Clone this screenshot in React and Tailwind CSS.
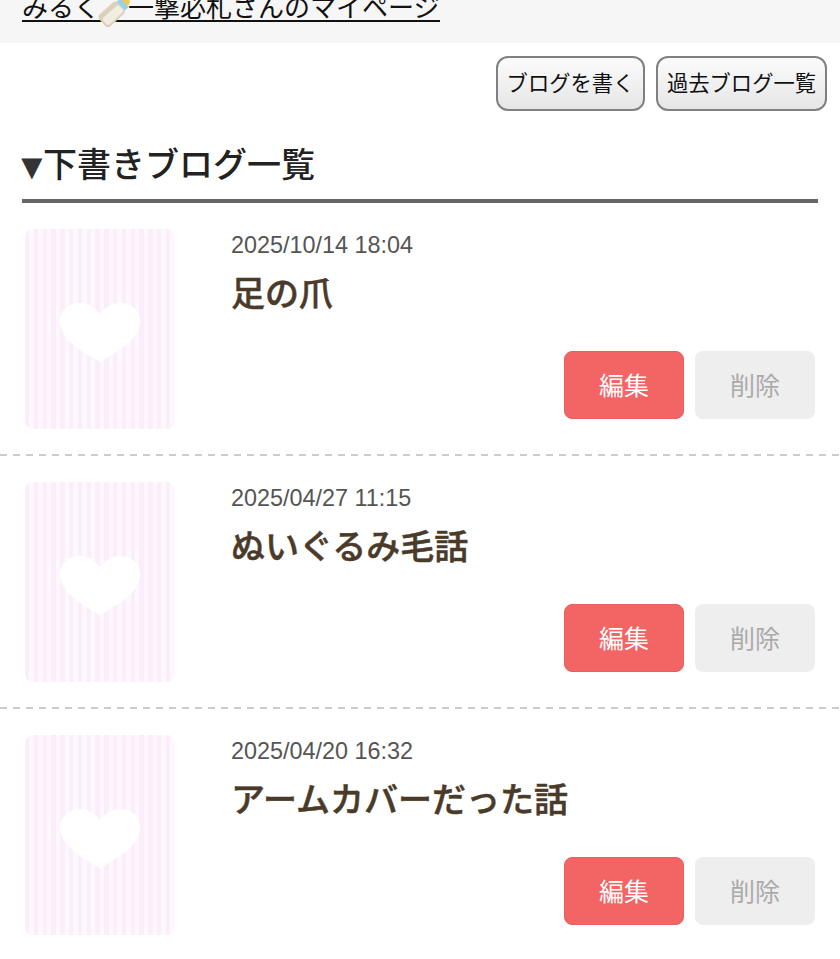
const jp = "font-['Liberation_Sans','Noto_Sans_CJK_JP',sans-serif]";

const drafts = [
  { date: "2025/10/14 18:04", title: "足の爪" },
  { date: "2025/04/27 11:15", title: "ぬいぐるみ毛話" },
  { date: "2025/04/20 16:32", title: "アームカバーだった話" },
];

function Bottle() {
  return (
    <svg width="30" height="30" viewBox="0 0 30 30" className="inline-block align-[-2px] mx-[-1px] my-[-10px] overflow-visible">
      <g transform="rotate(48 13 15)">
        <rect x="9" y="-7" width="8" height="7" rx="3" fill="#f2c94c" />
        <rect x="7" y="-2" width="12" height="6" rx="1" fill="#9fd0ea" />
        <rect x="5" y="3" width="16" height="25" rx="4" fill="#d9d1ba" />
        <rect x="10" y="4" width="9" height="22" rx="3" fill="#f1ede1" />
      </g>
    </svg>
  );
}

function Thumb() {
  return (
    <div className="w-[150px] h-[200px] shrink-0 rounded-[8px] flex items-center justify-center pt-[8px] bg-[repeating-linear-gradient(90deg,#fbeefb_0,#fbeefb_4.4px,#fef8fe_4.4px,#fef8fe_8.8px)]">
      <svg width="80" height="60" viewBox="0 0 80 60">
        <path d="M40 59C30 52 0 40 0 18C0 7 9 0 20 0C29 0 36 5 40 12C44 5 51 0 60 0C71 0 80 7 80 18C80 40 50 52 40 59Z" fill="#fff" />
      </svg>
    </div>
  );
}

function DraftRow({ item, last }) {
  return (
    <div>
      <div className="flex pl-[25px] pr-[25px] pt-[26px] pb-[25px]">
        <Thumb />
        <div className="flex-1 flex flex-col ml-[56px]">
          <p className="text-[23.4px] leading-[30px] mt-[1px] text-[#555555]">{item.date}</p>
          <h3 className="text-[34px] leading-[48px] mt-[10px] font-medium [-webkit-text-stroke:0.5px_#4a3a2a] text-[#4a3a2a]">{item.title}</h3>
          <div className="flex justify-end gap-[11px] mt-auto mb-[10px]">
            <button className="w-[120px] h-[68px] pt-[3px] rounded-[8px] border border-[#e86060] bg-[#f36464] text-white text-[25px]">編集</button>
            <button className="w-[120px] h-[68px] pt-[3px] rounded-[8px] bg-[#eeeeee] text-[#aaaaaa] text-[25px]">削除</button>
          </div>
        </div>
      </div>
      {!last && <div className="h-[2px] bg-[repeating-linear-gradient(90deg,#cccccc_0,#cccccc_7px,transparent_7px,transparent_13px)]" />}
    </div>
  );
}

export default function App() {
  return (
    <div className={`${jp} w-[840px] h-[959px] overflow-hidden bg-white text-[#222222]`}>
      <div className="h-[43px] bg-[#f6f6f6] pl-[22px] overflow-hidden">
        <a className="block w-fit mt-[-4px] text-[26px] leading-[24px] text-[#111111] border-b-2 border-[#111111] whitespace-nowrap">
          みるく<Bottle />一撃必札さんのマイページ
        </a>
      </div>
      <div className="flex justify-end gap-[11px] pr-[13px] mt-[13px]">
        <button className="w-[149px] h-[55px] pt-[2px] rounded-[12px] border-2 border-[#808080] bg-gradient-to-b from-[#fbfbfb] to-[#e6e6e6] text-[21.3px] text-[#111111]">ブログを書く</button>
        <button className="w-[171px] h-[55px] pt-[2px] rounded-[12px] border-2 border-[#808080] bg-gradient-to-b from-[#fbfbfb] to-[#e6e6e6] text-[21.3px] text-[#111111]">過去ブログ一覧</button>
      </div>
      <h2 className="mx-[22px] mt-[27px] h-[65px] border-b-4 border-[#666666] text-[34px] leading-[54px] font-medium text-[#222222]">
        <span className="inline-flex w-[29px] ml-[-8px] justify-start text-[36px] leading-[0] align-[-2px] text-[#333333]">▼</span>下書きブログ一覧
      </h2>
      {drafts.map((item, i) => (
        <DraftRow key={i} item={item} last={i === drafts.length - 1} />
      ))}
    </div>
  );
}
